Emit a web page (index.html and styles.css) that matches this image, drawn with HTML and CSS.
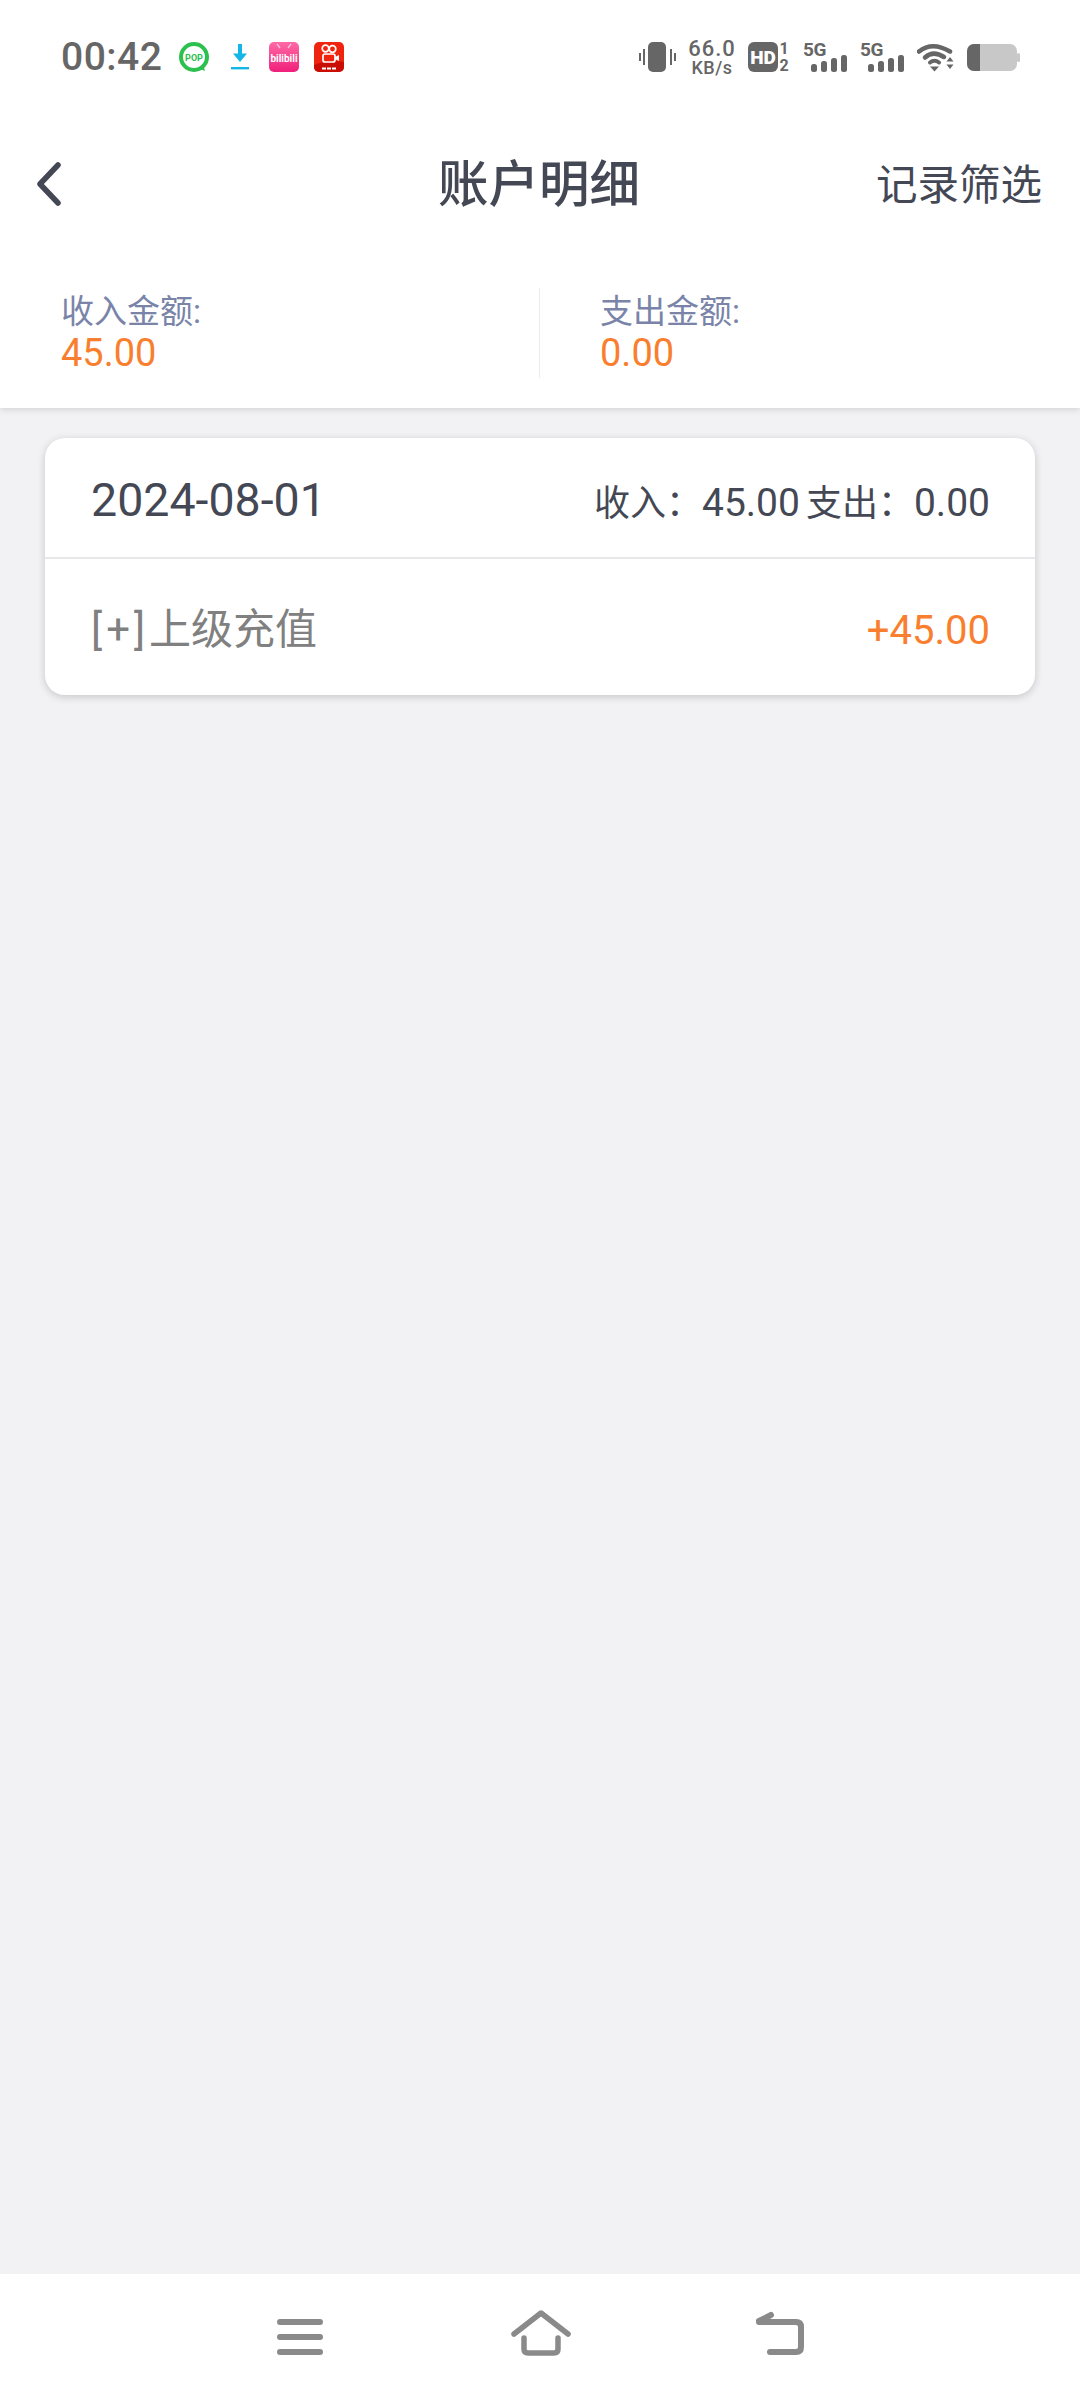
FILE: index.html
```html
<!DOCTYPE html>
<html lang="zh-CN">
<head>
<meta charset="utf-8">
<title>账户明细</title>
<link rel="stylesheet" href="styles.css">
</head>
<body>
<div class="page">
  <div class="top">
    <div class="status">
      <span class="time">00:42</span>
      <svg class="ic pop" viewBox="0 0 30 30"><circle cx="15" cy="15" r="13" fill="none" stroke="#2cc04f" stroke-width="4"/><path d="M19 26l7 3-2-7z" fill="#2cc04f"/><text x="15" y="18.500" class="poptext">POP</text></svg>
      <svg class="ic dl" viewBox="0 0 20 30"><path d="M10 2v13" stroke="#14b6e8" stroke-width="4" fill="none"/><path d="M3 11.500h14L10 20z" fill="#14b6e8"/><rect x="1" y="25" width="18" height="2.400" fill="#14b6e8"/></svg>
      <svg class="ic app" viewBox="0 0 30 30"><defs><linearGradient id="bili" x1="0" y1="0" x2="0" y2="1"><stop offset="0" stop-color="#ff6aa6"/><stop offset="1" stop-color="#f0207a"/></linearGradient></defs><rect width="30" height="30" rx="5" fill="url(#bili)"/><path d="M8 2l3 4M22 2l-3 4" stroke="#ffc4dc" stroke-width="1.300"/><text x="15" y="20" class="bilitext">bilibili</text></svg>
      <svg class="ic app" viewBox="0 0 30 30"><rect width="30" height="30" rx="5" fill="#f0240e"/><path d="M0 23q15-6 30-3v5a5 5 0 0 1-5 5H5a5 5 0 0 1-5-5z" fill="#c90d05"/><circle cx="11.500" cy="6.500" r="3.300" fill="none" stroke="#fff" stroke-width="1.700"/><circle cx="18.500" cy="7" r="3.300" fill="none" stroke="#fff" stroke-width="1.700"/><rect x="9" y="12" width="12" height="8" rx="2" fill="none" stroke="#fff" stroke-width="1.700"/><path d="M21 15l4-2v6l-4-2z" fill="#fff"/><path d="M8 26.500h14" stroke="#fff" stroke-width="2" stroke-dasharray="4 1"/></svg>
      <span class="spacer"></span>
      <svg class="ic vib" viewBox="0 0 37 30"><rect x="9" y="0" width="18" height="30" rx="5" fill="#666"/><path d="M1 11v8M5 7v16M32 7v16M36 11v8" stroke="#666" stroke-width="2" fill="none"/></svg>
      <div class="speed"><span class="sp1">66.0</span><span class="sp2">KB/s</span></div>
      <svg class="ic hd" viewBox="0 0 30 30"><rect width="30" height="30" rx="6" fill="#666"/><text x="15" y="21.500" class="hdtext">HD</text></svg>
      <div class="hdnums"><span>1</span><span>2</span></div>
      <div class="sig"><span class="g5">5G</span><svg class="bars" viewBox="0 0 36 17"><rect x="0" y="9" width="6" height="8" rx="2.500"/><rect x="10" y="6" width="6" height="11" rx="2.500"/><rect x="20" y="3" width="6" height="14" rx="2.500"/><rect x="30" y="0" width="6" height="17" rx="2.500"/></svg></div>
      <div class="sig"><span class="g5">5G</span><svg class="bars" viewBox="0 0 36 17"><rect x="0" y="9" width="6" height="8" rx="2.500"/><rect x="10" y="6" width="6" height="11" rx="2.500"/><rect x="20" y="3" width="6" height="14" rx="2.500"/><rect x="30" y="0" width="6" height="17" rx="2.500"/></svg></div>
      <svg class="ic wifi" viewBox="0 0 37 30"><path d="M2 9.500Q15-1 33 9.500" fill="none" stroke="#666" stroke-width="4.500" stroke-linecap="round"/><path d="M8 15.500Q16 8 27 15" fill="none" stroke="#666" stroke-width="4.500" stroke-linecap="round"/><path d="M13 20.500q4.500-3.500 9 0" fill="none" stroke="#666" stroke-width="4" stroke-linecap="round"/><path d="M13 24.500h9l-4.500 5z" fill="#666"/><path d="M33 15l3.500 4.500h-7zM29.500 22.500h7l-3.500 4.500z" fill="#666"/></svg>
      <svg class="ic bat" viewBox="0 0 53 27"><rect x="0" y="0" width="50" height="27" rx="7" fill="#c8c8c8"/><path d="M7 0h6v27H7a7 7 0 0 1-7-7V7a7 7 0 0 1 7-7z" fill="#666"/><rect x="50" y="9" width="3" height="9" rx="1.500" fill="#c8c8c8"/></svg>
    </div>
    <div class="nav">
      <svg class="back" viewBox="0 0 26 44"><path d="M22 3L4 22l18 19" fill="none" stroke="#444854" stroke-width="5.500" stroke-linecap="round" stroke-linejoin="round"/></svg>
      <h1 class="title">账户明细</h1>
      <span class="filter">记录筛选</span>
    </div>
    <div class="stats">
      <div class="stat">
        <div class="stat-label">收入金额:</div>
        <div class="stat-value">45.00</div>
      </div>
      <div class="stat stat-second">
        <div class="stat-label">支出金额:</div>
        <div class="stat-value">0.00</div>
      </div>
    </div>
  </div>
  <main class="content">
    <section class="card">
      <div class="card-head">
        <span class="date">2024-08-01</span>
        <span class="sum">收入：<span class="num">45.00</span><span class="sum-gap">支出：</span><span class="num">0.00</span></span>
      </div>
      <div class="card-row">
        <span class="desc"><span class="bracket">[+]</span>上级充值</span>
        <span class="amount">+45.00</span>
      </div>
    </section>
  </main>
  <nav class="sysnav">
    <svg class="nav-ic menu" viewBox="0 0 46 40"><path d="M3 7h40M3 22h40M3 37h40" stroke="#8a8a8a" stroke-width="6" stroke-linecap="round" fill="none"/></svg>
    <svg class="nav-ic home" viewBox="0 0 60 46"><path d="M3 24L30 3l27 21" stroke="#8a8a8a" stroke-width="5.500" stroke-linecap="round" stroke-linejoin="round" fill="none"/><path d="M13 28v11q0 4 4 4h26q4 0 4-4V28" stroke="#8a8a8a" stroke-width="5.500" stroke-linecap="round" fill="none"/></svg>
    <svg class="nav-ic ret" viewBox="0 0 50 46"><path d="M3 12h37q5 0 5 5v20q0 5-5 5H14" stroke="#8a8a8a" stroke-width="6" stroke-linecap="round" fill="none"/><path d="M3 11L15 5" stroke="#8a8a8a" stroke-width="6" stroke-linecap="round" fill="none"/></svg>
  </nav>
</div>
</body>
</html>
```

FILE: styles.css
```css
* { box-sizing: border-box; }
html, body { margin: 0; padding: 0; }
body { font-family: Roboto, "Noto Sans CJK SC", sans-serif; background: #f2f2f4; }
.page { width: 1080px; height: 2400px; display: flex; flex-direction: column; background: #f2f2f4; }

.top { background: #fff; box-shadow: 0 2px 6px rgba(0,0,0,.12); position: relative; height: 408px; flex: none; }

.status { height: 114px; padding: 0 60px 0 61px; display: flex; align-items: center; }
.time { font-size: 39px; font-weight: 500; color: #666; width: 118px; letter-spacing: .5px; }
.ic { flex: none; display: block; }
.pop { width: 30px; height: 30px; }
.poptext { font: 700 9px Roboto, sans-serif; fill: #2cc04f; text-anchor: middle; }
.bilitext { font: 700 10px Roboto, sans-serif; fill: #fff; text-anchor: middle; }
.dl { width: 20px; height: 30px; margin-left: 21px; }
.app { width: 30px; height: 30px; }
.dl + .app { margin-left: 19px; }
.app + .app { margin-left: 15px; }
.spacer { flex: 1; }
.vib { width: 37px; height: 30px; }
.speed { display: flex; flex-direction: column; align-items: center; width: 46px; margin-left: 13px; color: #666; line-height: 1; font-weight: 500; padding-top: 2px; }
.sp1 { font-size: 22px; height: 20px; line-height: 20px; letter-spacing: 1px; }
.sp2 { font-size: 18px; height: 18px; line-height: 18px; letter-spacing: .5px; }
.hd { width: 30px; height: 30px; margin-left: 13px; }
.hdtext { font: 900 19px Roboto, sans-serif; fill: #fff; text-anchor: middle; }
.hdnums { width: 12px; height: 32px; display: flex; flex-direction: column; justify-content: space-between; align-items: center; font-size: 16px; font-weight: 700; line-height: 15px; color: #666; flex: none; }
.sig { position: relative; width: 44px; height: 30px; margin-left: 13px; flex: none; }
.sig + .sig { margin-left: 13px; }
.g5 { font-size: 19px; font-weight: 700; color: #666; line-height: 16px; display: block; letter-spacing: -.5px; }
.bars { position: absolute; right: 0; bottom: 0; width: 36px; height: 17px; fill: #666; }
.wifi { width: 37px; height: 30px; margin-left: 13px; }
.bat { width: 53px; height: 27px; margin-left: 13px; }

.nav { height: 140px; padding: 0 38px 0 36px; display: grid; grid-template-columns: 1fr auto 1fr; align-items: center; }
.back { width: 26px; height: 44px; display: block; }
.title { margin: 0; font-size: 50.500px; font-weight: 500; color: #444854; line-height: 1; padding-top: 2px; }
.filter { justify-self: end; font-size: 41.500px; color: #444854; line-height: 1; padding-top: 4px; }

.stats { display: flex; margin-top: 34px; height: 90px; }
.stat { width: 539px; padding-left: 61px; display: flex; flex-direction: column; }
.stat-second { width: auto; padding-left: 60px; border-left: 1px solid #ececec; }
.stat-label { font-size: 33px; color: #7a84a8; line-height: 40px; margin-top: 4px; }
.stat-value { font-size: 38px; color: #f97f2f; line-height: 40px; margin-top: 1px; }

.content { flex: 1; padding: 30px 45px 0; }
.card { background: #fff; border-radius: 20px; box-shadow: 0 2px 8px rgba(0,0,0,.18); height: 257px; }
.card-head { height: 121px; padding: 4px 45px 0 46px; display: flex; justify-content: space-between; align-items: center; border-bottom: 2px solid #e8e8ea; }
.date { font-size: 46.500px; color: #444854; }
.sum { font-size: 36px; color: #444854; }
.num { font-size: 39px; }
.sum-gap { margin-left: 6px; }
.card-row { height: 134px; padding: 0 45px 2px 46px; display: flex; justify-content: space-between; align-items: center; }
.desc { font-size: 42px; color: #808080; }
.bracket { letter-spacing: 4px; }
.amount { font-size: 40px; color: #f97f2f; padding-top: 10px; }

.sysnav { height: 126px; background: #fff; flex: none; display: flex; align-items: flex-start; padding: 36px 0 0 277px; }
.nav-ic { display: block; flex: none; }
.menu { width: 46px; height: 40px; margin-top: 5px; }
.home { width: 60px; height: 46px; margin-left: 188px; }
.ret { width: 50px; height: 46px; margin-left: 185px; }
```
